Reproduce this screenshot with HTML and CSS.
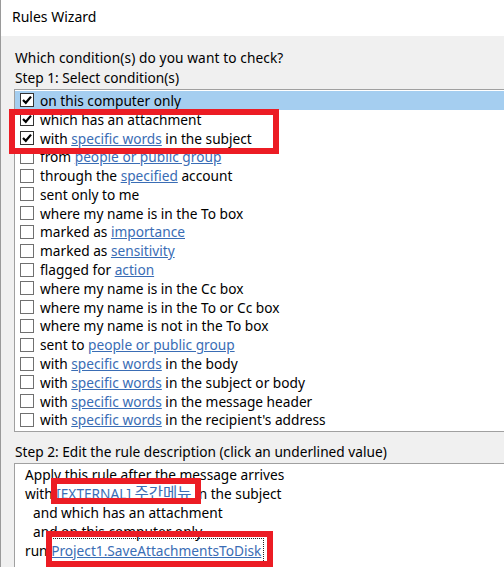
FILE: index.html
```html
<!DOCTYPE html>
<html lang="en">
<head>
    <meta charset="UTF-8">
    <title>Rules Wizard</title>
    <link rel="stylesheet" href="styles.css">
</head>
<body>
    <div class="window">
        <div class="titlebar">Rules Wizard</div>
        <div class="content">
            <p class="prompt">Which condition(s) do you want to check?</p>
            <p class="step">Step 1: Select condition(s)</p>
            <ul class="conditions">
                <li class="selected"><span class="check on"></span><span>on this computer only</span></li>
                <li><span class="check on"></span><span>which has an attachment</span></li>
                <li><span class="check on"></span><span>with <a href="#">specific words</a> in the subject</span></li>
                <li><span class="check"></span><span>from <a href="#">people or public group</a></span></li>
                <li><span class="check"></span><span>through the <a href="#">specified</a> account</span></li>
                <li><span class="check"></span><span>sent only to me</span></li>
                <li><span class="check"></span><span>where my name is in the To box</span></li>
                <li><span class="check"></span><span>marked as <a href="#">importance</a></span></li>
                <li><span class="check"></span><span>marked as <a href="#">sensitivity</a></span></li>
                <li><span class="check"></span><span>flagged for <a href="#">action</a></span></li>
                <li><span class="check"></span><span>where my name is in the Cc box</span></li>
                <li><span class="check"></span><span>where my name is in the To or Cc box</span></li>
                <li><span class="check"></span><span>where my name is not in the To box</span></li>
                <li><span class="check"></span><span>sent to <a href="#">people or public group</a></span></li>
                <li><span class="check"></span><span>with <a href="#">specific words</a> in the body</span></li>
                <li><span class="check"></span><span>with <a href="#">specific words</a> in the subject or body</span></li>
                <li><span class="check"></span><span>with <a href="#">specific words</a> in the message header</span></li>
                <li><span class="check"></span><span>with <a href="#">specific words</a> in the recipient's address</span></li>
            </ul>
            <p class="step step-two">Step 2: Edit the rule description (click an underlined value)</p>
            <div class="description">
                <div>Apply this rule after the message arrives</div>
                <div>with <a href="#">[EXTERNAL] <span class="ko">주간메뉴</span></a> in the subject</div>
                <div class="indent">and which has an attachment</div>
                <div class="indent">and on this computer only</div>
                <div>run <a href="#" class="focused">Project1.SaveAttachmentsToDisk</a></div>
            </div>
        </div>

        <div class="mark mark-conditions"></div>
        <div class="mark mark-subject"></div>
        <div class="mark mark-script"></div>
    </div>
</body>
</html>
```

FILE: styles.css
```css
body {
    margin: 0;
    overflow: hidden;
    font-family: "Noto Sans", "Noto Sans CJK KR", sans-serif;
    font-size: 13.7px;
    color: #000;
}
.window {
    position: relative;
    width: 504px;
    height: 567px;
    border-left: 1px solid #9a9a9a;
    box-sizing: border-box;
    background: #f0f0f0;
    overflow: hidden;
}
.titlebar {
    height: 36px;
    line-height: 34px;
    padding-left: 11px;
    background: #fff;
    font-size: 14px;
}
.content {
    padding: 12px 0 0 13px;
}
p {
    margin: 0;
    line-height: 20px;
    white-space: nowrap;
}
.prompt {
    padding-left: 1px;
    letter-spacing: 0.1px;
}
.step {
    padding-left: 1px;
}
.conditions {
    list-style: none;
    margin: 1px 0 0;
    padding: 1px 0 2px;
    width: 520px;
    background: #fff;
    border: 1px solid #a0a0a0;
    border-right: none;
}
.conditions li {
    display: flex;
    align-items: center;
    height: 18.8px;
    padding-left: 5px;
    white-space: nowrap;
}
.conditions li.selected {
    background: #a5cef0;
}
.check {
    width: 14px;
    height: 14px;
    margin-right: 6px;
    border: 1px solid #707070;
    background: #fff;
    box-sizing: border-box;
    flex-shrink: 0;
}
.check.on {
    border-color: #333;
    background: #fff url("data:image/svg+xml,%3Csvg xmlns='http://www.w3.org/2000/svg' width='12' height='12'%3E%3Cpath d='M2 6 L4.8 8.8 L10 2.6' fill='none' stroke='%23000' stroke-width='2.2'/%3E%3C/svg%3E") center no-repeat;
}
a {
    color: #3a6db5;
    text-decoration: underline;
}
.step-two {
    margin-top: 10px;
}
.description {
    margin-top: 1px;
    width: 520px;
    height: 120px;
    padding: 2px 0 0 10px;
    background: #fff;
    border-top: 1px solid #a0a0a0;
    border-left: 1px solid #a0a0a0;
    line-height: 18.8px;
    white-space: nowrap;
}
.ko {
    font-size: 15.5px;
    line-height: 1;
}
.indent {
    padding-left: 8px;
}
.focused {
    outline: 1px dotted #222;
    outline-offset: 2px;
}
.mark {
    position: absolute;
    border: 6px solid #ec1c24;
    box-sizing: border-box;
}
.mark-conditions {
    left: 8px;
    top: 109px;
    width: 270px;
    height: 45px;
}
.mark-subject {
    left: 50px;
    top: 478px;
    width: 150px;
    height: 26px;
}
.mark-script {
    left: 45px;
    top: 531px;
    width: 227px;
    height: 36px;
}
```
